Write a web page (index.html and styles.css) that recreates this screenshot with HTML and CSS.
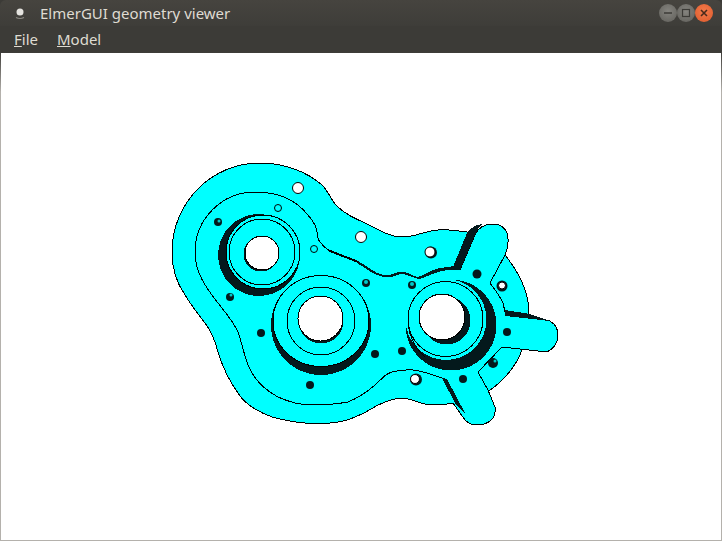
FILE: index.html
```html
<!DOCTYPE html>
<html lang="en">
<head>
    <meta charset="UTF-8">
    <title>ElmerGUI geometry viewer</title>
    <link rel="stylesheet" href="styles.css">
</head>
<body>
<div class="window">
    <div class="titlebar">
        <svg class="app-icon" width="12" height="14" viewBox="0 0 12 14">
            <circle cx="6" cy="6" r="3.5" fill="#e4e3df"/>
            <path d="M2 11.5 Q6 13.5 10 11.5" fill="none" stroke="#8c8a84" stroke-width="1.2"/>
        </svg>
        <span class="title">ElmerGUI geometry viewer</span>
        <div class="win-buttons">
            <span class="win-btn">
                <svg width="18" height="18" viewBox="0 0 18 18"><path d="M5 9 H13" stroke="#3c3b37" stroke-width="1.5"/></svg>
            </span>
            <span class="win-btn">
                <svg width="18" height="18" viewBox="0 0 18 18"><rect x="5.5" y="5.5" width="7" height="7" fill="none" stroke="#3c3b37" stroke-width="1.2"/></svg>
            </span>
            <span class="win-btn close">
                <svg width="18" height="18" viewBox="0 0 18 18"><path d="M6 6 L12 12 M12 6 L6 12" stroke="#4a2a1c" stroke-width="1.6"/></svg>
            </span>
        </div>
    </div>
    <div class="menubar">
        <span class="menu-item"><u>F</u>ile</span>
        <span class="menu-item"><u>M</u>odel</span>
    </div>
    <div class="viewer">
        <svg class="geometry" width="720" height="487" viewBox="1 53 720 487" shape-rendering="crispEdges">
            <!-- body outline -->
            <path class="part" d="M260 163 C285 163 307 172 322 185 C329 192 331 200 337 206 C345 214 354 218 365 223 C378 229 389 237 402 237 C415 237 425 231 438 230 C448 229 458 231 467 232 L505 255 C513 265 521 277 525 290 C528 299 529 305 529 312 L522 350 C519 358 517 362 513 367 C507 376 499 384 490 390 L453 403 C445 405 437 405 430 405 C420 404 412 399 403 398 C394 398 387 401 378 405 C365 413 352 420 338 422 C327 424 316 424 305 423 C293 422 283 420 272 417 C256 411 244 403 238 393 C227 378 222 365 218 352 C215 340 211 331 205 323 C198 314 191 305 185 295 C176 282 172 267 172 252 C172 203 211 163 260 163 Z"/>

            <!-- arms, filled first so the body edge under them goes away -->
            <path class="fill" d="M505 312 L550 321 C555 324 558 329 558 335 C558 343 555 348 547 352 L502 347 L478 372 L488 390 L495 407 C496 414 494 418 490 421 C486 424 482 425 477 425 C472 425 468 423 465 420 L453 403 L442 378 L470 340 Z"/>
            <path class="fill" d="M440 276 L460 270 L475 235 C478 228 484 224 493 224 C500 224 505 228 507 233 C509 240 508 248 505 255 L490 283 L503 303 L505 312 L502 347 L470 380 L430 380 L420 300 Z"/>
            <path class="line" d="M505 312 L550 321 C555 324 558 329 558 335 C558 343 555 348 547 352 L502 347 L478 372 L488 390 L495 407 C496 414 494 418 490 421 C486 424 482 425 477 425 C472 425 468 423 465 420 L453 403"/>
            <path class="line" d="M460 270 L475 235 C478 228 484 224 493 224 C500 224 505 228 507 233 C509 240 508 248 505 255 L490 283 C495 290 500 296 503 303 L505 312"/>

            <!-- black edges of the raised arms -->
            <path class="dark" d="M453 267 L467 233 C471 228 476 224 483 224 C479 226 477 230 475 235 L460 270 Z"/>
            <path class="dark" d="M505 310 L530 314 L550 321 L505 316 Z"/>
            <path class="dark" d="M442 378 L447 379 L465 413 L456 405 Z"/>
            <path class="dark" d="M358 261 C366 265 375 274 384 275 C392 276 397 271 403 272 C409 272 412 276 417 277 C424 276 432 269 440 268 L454 266 L460 270 C450 269 441 271 435 273 C429 275 424 278 420 279 C414 279 410 275 403 274 C396 274 392 279 384 277 C375 276 366 268 357 263 Z"/>

            <!-- inner contour -->
            <path class="line heavy" d="M328 250 C339 255 349 258 358 262"/>
            <path class="line" d="M328 250 C322 245 319 242 318 238 C317 232 317 229 315 225 C311 218 305 211 298 205 C286 196 271 192 255 192 C222 192 195 219 195 252 C195 272 206 288 218 303 C225 312 233 321 238 332 C242 343 244 355 248 365 C254 380 265 390 278 397 C289 402 300 405 312 405 C325 405 337 404 348 402 C358 398 367 392 375 385 C382 378 387 373 392 372 C402 369 408 370 413 370 C423 371 433 375 442 378"/>

            <!-- boss top left -->
            <circle class="dark" cx="259" cy="255" r="41"/>
            <circle class="part" cx="263" cy="252" r="37"/>
            <circle class="line" cx="262" cy="252" r="33"/>
            <circle class="dark" cx="261" cy="254" r="17.5"/>
            <circle class="hole" cx="262" cy="253" r="17"/>

            <!-- boss middle -->
            <circle class="dark" cx="321" cy="325" r="50"/>
            <ellipse class="part" cx="321" cy="321" rx="48" ry="45.5"/>
            <circle class="line" cx="321" cy="321" r="34"/>
            <circle class="dark" cx="321" cy="321" r="22.5"/>
            <circle class="hole" cx="320.5" cy="318.5" r="22.5"/>

            <!-- boss right -->
            <circle class="dark" cx="451" cy="325" r="45.5"/>
            <circle class="fill" cx="446" cy="319.5" r="40.5"/>
            <circle class="line" cx="445.5" cy="319" r="37.5"/>
            <path class="line" d="M408 325 C410 338 416 349 425 357"/>
            <circle class="dark" cx="446.5" cy="320.5" r="24"/>
            <circle class="hole" cx="442" cy="317" r="23"/>

            <!-- bolt holes -->
            <g shape-rendering="auto">
                <circle class="dark" cx="477" cy="274" r="4.5"/>
                <circle class="dark" cx="507" cy="332" r="4"/>
                <circle class="dark" cx="310" cy="385" r="4"/>
                <circle class="dark" cx="375" cy="354" r="4"/>
                <circle class="dark" cx="402" cy="351" r="4"/>
                <circle class="dark" cx="463" cy="379" r="4"/>
                <circle class="dark" cx="493" cy="363" r="5"/>
                <circle class="dark" cx="230" cy="297" r="4"/>
                <circle class="dark" cx="261" cy="333" r="4"/>
                <circle class="dark" cx="218" cy="222" r="4"/>
                <circle class="dark" cx="366" cy="283" r="4"/>
                <circle class="dark" cx="412" cy="285" r="4"/>
                <circle class="glint" cx="219" cy="221" r="1.5"/>
                <circle class="glint" cx="231" cy="295" r="1.5"/>
                <circle class="glint" cx="366" cy="282" r="2"/>
                <circle class="glint" cx="412" cy="284" r="2"/>
                <circle class="glint" cx="495" cy="361" r="1.5"/>
                <circle class="ring" cx="278" cy="208" r="3.5"/>
                <circle class="ring" cx="314" cy="249" r="3.5"/>
                <circle class="dark" cx="431" cy="252.5" r="6"/>
                <circle class="dark" cx="502" cy="286" r="5.5"/>
                <circle class="dark" cx="416" cy="379.5" r="6"/>
                <circle class="hole" cx="298" cy="188" r="5.5"/>
                <circle class="hole" cx="361" cy="237" r="5.5"/>
                <circle class="hole" cx="430" cy="252" r="5"/>
                <circle class="hole" cx="502" cy="285.5" r="3.5"/>
                <circle class="hole" cx="415" cy="379" r="4.5"/>
            </g>
        </svg>
    </div>
</div>
</body>
</html>
```

FILE: styles.css
```css
html, body {
    margin: 0;
    height: 100%;
    background-color: #3c3b37;
}

.window {
    display: flex;
    flex-direction: column;
    height: 541px;
    font-family: "Noto Sans", sans-serif;
    color: #dfdbd2;
}

.titlebar {
    display: flex;
    align-items: center;
    height: 27px;
    padding: 0 9px 0 14px;
    background: linear-gradient(#46443f, #3e3d39);
    border-radius: 6px 6px 0 0;
}

.app-icon {
    margin-right: 14px;
}

.title {
    font-size: 15px;
    flex: 1;
}

.win-buttons {
    display: flex;
}

.win-btn {
    display: flex;
    width: 18px;
    height: 18px;
    border-radius: 50%;
    background: radial-gradient(circle at 50% 40%, #85847f, #5f5e59);
}

.win-btn.close {
    background: radial-gradient(circle at 50% 40%, #f47a4a, #dd5a2c);
}

.menubar {
    display: flex;
    align-items: center;
    gap: 19px;
    height: 26px;
    padding: 0 14px;
    background-color: #3c3b37;
    font-size: 15px;
}

.viewer {
    flex: 1;
    background-color: #fff;
    border: 1px solid;
    border-image: linear-gradient(#3c3b37, #b4b1ac 40px) 1;
    box-sizing: border-box;
}

.geometry {
    display: block;
}

.part {
    fill: #00ffff;
    stroke: #000;
    stroke-width: 1;
}

.fill {
    fill: #00ffff;
}

.line {
    fill: none;
    stroke: #000;
    stroke-width: 1;
}

.heavy {
    stroke-width: 2;
}

.dark {
    fill: #04191c;
}

.hole {
    fill: #fff;
    stroke: #000;
    stroke-width: 1;
}

.ring {
    fill: #00ffff;
    stroke: #000;
    stroke-width: 1;
}

.glint {
    fill: #00c8c8;
}
```
